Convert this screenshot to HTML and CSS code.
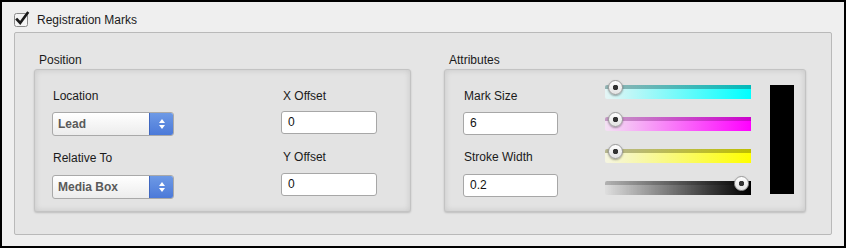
FILE: index.html
```html
<!DOCTYPE html>
<html lang="en">
<head>
    <meta charset="UTF-8">
    <title>Registration Marks</title>
    <link rel="stylesheet" href="styles.css">
</head>
<body>
<div class="frame">
    <div class="head">
        <span class="check">
            <svg width="16" height="16" viewBox="0 0 16 16">
                <rect x="0.5" y="2.5" width="13" height="13" rx="2" fill="#f4f4f4" stroke="#8a8a8a"/>
                <path d="M3 8.5 L6.2 12 L13.5 2" fill="none" stroke="#1a1a1a" stroke-width="2.6" stroke-linecap="square"/>
            </svg>
        </span>
        <span class="title">Registration Marks</span>
    </div>
    <div class="group">
        <div class="section pos">
            <div class="cap">Position</div>
            <div class="panel pos-panel">
                <div class="col">
                    <div class="lbl">Location</div>
                    <div class="sel"><span class="val">Lead</span><span class="arr"><i class="up"></i><i class="dn"></i></span></div>
                    <div class="lbl second">Relative To</div>
                    <div class="sel"><span class="val">Media Box</span><span class="arr"><i class="up"></i><i class="dn"></i></span></div>
                </div>
                <div class="col offs">
                    <div class="lbl">X Offset</div>
                    <div class="inp">0</div>
                    <div class="lbl second">Y Offset</div>
                    <div class="inp">0</div>
                </div>
            </div>
        </div>
        <div class="section attr">
            <div class="cap">Attributes</div>
            <div class="panel attr-panel">
                <div class="col">
                    <div class="lbl">Mark Size</div>
                    <div class="inp wide">6</div>
                    <div class="lbl second">Stroke Width</div>
                    <div class="inp wide">0.2</div>
                </div>
                <div class="sliders">
                    <div class="track cyan"><span class="thumb" style="left:3px"></span></div>
                    <div class="track magenta"><span class="thumb" style="left:3px"></span></div>
                    <div class="track yellow"><span class="thumb" style="left:3px"></span></div>
                    <div class="track black"><span class="thumb" style="left:129px"></span></div>
                </div>
                <div class="swatch"></div>
            </div>
        </div>
    </div>
</div>
</body>
</html>
```

FILE: styles.css
```css
body{margin:0;font-family:"Liberation Sans",Arial,sans-serif;font-size:12px;color:#1a1a1a;}
.frame{width:846px;height:248px;box-sizing:border-box;border:2px solid #000;background:#efefef;padding:9px 12px 0 12px;}
.head{display:flex;align-items:center;height:16px;}
.check{width:16px;height:16px;display:inline-block;}
.check svg{display:block;}
.title{margin-left:7px;font-size:12px;line-height:16px;position:relative;top:1px;}
.group{margin-top:5px;width:818px;height:203px;box-sizing:border-box;border:1px solid #b9b9b9;border-radius:2px;background:#e5e5e5;display:flex;padding:0 0 0 19px;}
.section{display:flex;flex-direction:column;}
.attr{margin-left:33px;}
.cap{height:14px;line-height:14px;padding-left:5px;margin-top:20px;margin-bottom:2px;}
.panel{box-sizing:border-box;height:143px;border:1px solid #c3c3c3;border-radius:3px;background:#e3e3e3;box-shadow:inset 0 0 6px rgba(0,0,0,0.13),0 1px 2px rgba(0,0,0,0.18);display:flex;padding:19px 0 0 0;}
.pos-panel{width:377px;padding-left:17px;}
.attr-panel{width:362px;padding-left:18px;}
.col{display:flex;flex-direction:column;}
.offs{margin-left:108px;}
.lbl{height:14px;line-height:14px;margin-left:1px;margin-bottom:9px;}
.lbl.second{margin-top:15px;margin-bottom:10px;}
.offs .lbl{margin-bottom:8px;}
.offs .lbl.second{margin-top:16px;margin-bottom:9px;}
.sel{width:122px;height:24px;box-sizing:border-box;border:1px solid #a9a9a9;border-radius:3px;background:linear-gradient(#ffffff,#ececec);display:flex;overflow:hidden;}
.sel .val{flex:1;line-height:22px;padding-left:5px;font-weight:bold;color:#5a5a5a;font-size:12px;}
.sel .arr{width:24px;background:linear-gradient(#6f9be6,#4a78d8);border-left:1px solid #3f67c0;display:flex;flex-direction:column;align-items:center;justify-content:center;gap:2px;margin:-1px -1px -1px 0;border-radius:0 3px 3px 0;}
.arr i{width:0;height:0;border-left:3px solid transparent;border-right:3px solid transparent;}
.arr .up{border-bottom:4px solid #fff;}
.arr .dn{border-top:4px solid #fff;}
.inp{width:96px;height:23px;box-sizing:border-box;border:1px solid #a7a7a7;border-radius:3px;background:#fff;line-height:21px;padding-left:6px;font-size:12px;color:#111;margin-left:-1px;}
.inp.wide{width:95px;margin-left:0;}
.sliders{margin-left:47px;margin-top:-4px;display:flex;flex-direction:column;gap:18px;}
.track{position:relative;width:146px;height:14px;border-radius:2px 0 0 2px;}
.cyan{background:linear-gradient(rgba(0,60,60,0.35),rgba(0,60,60,0.35)) top/100% 4px no-repeat,linear-gradient(to right,#e6f5f5,#00ffff);}
.magenta{background:linear-gradient(rgba(90,0,90,0.3),rgba(90,0,90,0.3)) top/100% 4px no-repeat,linear-gradient(to right,#f3e2f3,#ff00ff);}
.yellow{background:linear-gradient(rgba(70,70,0,0.35),rgba(70,70,0,0.35)) top/100% 4px no-repeat,linear-gradient(to right,#f5f5e2,#ffff00);}
.black{background:linear-gradient(rgba(0,0,0,0.2),rgba(0,0,0,0.2)) top/100% 4px no-repeat,linear-gradient(to right,rgba(0,0,0,0.02),#3c3c3c 70%,#000);}
.thumb{position:absolute;top:-5px;width:15px;height:15px;box-sizing:border-box;border-radius:50%;border:1px solid #9a9a9a;background:radial-gradient(circle,#333 0,#333 2.5px,transparent 3px),linear-gradient(#ffffff,#e2e2e2);box-shadow:0 1px 2px rgba(0,0,0,0.35);}
.swatch{margin-left:19px;margin-top:-4px;width:24px;height:109px;background:#000;}
```
